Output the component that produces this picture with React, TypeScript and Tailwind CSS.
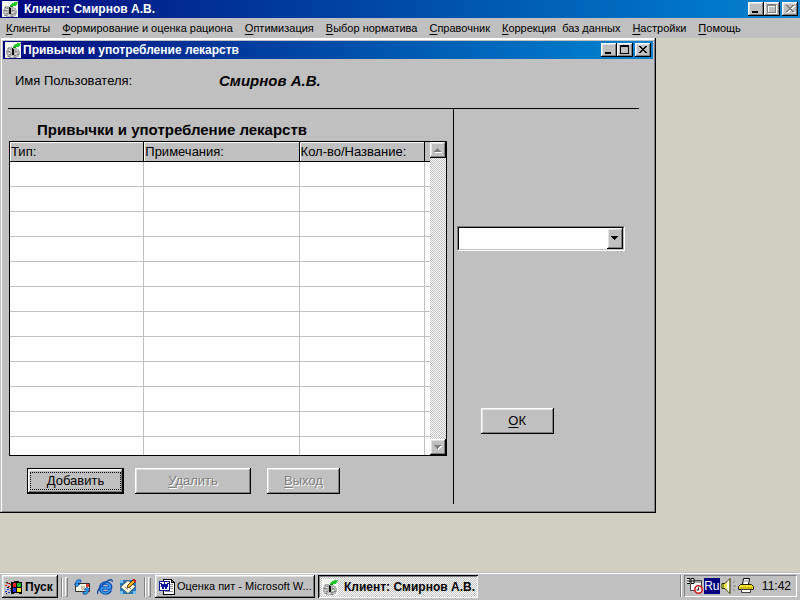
import type { ReactNode } from "react"
import clsx from "clsx"

const raised =
  "bg-[#c0c0c0] shadow-[inset_-1px_-1px_0_#000,inset_1px_1px_0_#fff,inset_-2px_-2px_0_#808080,inset_2px_2px_0_#dfdfdf]"
const checker = "bg-[conic-gradient(#fff_25%,#c0c0c0_0_50%,#fff_0_75%,#c0c0c0_0)] bg-size-[2px_2px]"

const menuItems = [
  { key: "К", rest: "лиенты" },
  { key: "Ф", rest: "ормирование и оценка рациона" },
  { key: "О", rest: "птимизация" },
  { key: "В", rest: "ыбор норматива" },
  { key: "С", rest: "правочник" },
  { key: "К", rest: "оррекция\u00a0 баз данных" },
  { key: "Н", rest: "астройки" },
  { key: "П", rest: "омощь" },
]

function AppIcon() {
  return (
    <svg viewBox="0 0 16 16" className="h-4 w-4 shrink-0" shapeRendering="crispEdges" aria-hidden="true">
      <rect width="16" height="16" fill="#f4f8f0" />
      <path d="M3 5h4v1h5v1h2v2h1v4h-1v2h-2v1H4v-1H2v-2H1V8h1V6h1z" fill="#b4b4b4" />
      <path d="M3 6h1v1H3zM2 9h3v1H2zM4 12h2v1H4zM3 14h2v1H3zM10 9h2v1h-2zM12 12h2v1h-2zM9 13h2v1H9zM5 7h1v1H5zM9 15h2v1H9z" fill="#808080" />
      <path d="M4 8h2v1H4zM3 11h2v1H3zM11 8h1v1h-1zM10 11h2v1h-2zM6 14h2v1H6z" fill="#e4e4e4" />
      <path d="M7 6h1v1h1v6H7z" fill="#101010" />
      <path d="M9 3h1V2h2V1h4v1h-1v2h-1v1h-3v1H8V4h1z" fill="#20c828" />
      <path d="M8 5h3v1H8z" fill="#109018" />
    </svg>
  )
}

function CaptionButton({ label, disabled, children }: { label: string; disabled?: boolean; children: ReactNode }) {
  return (
    <button type="button" aria-label={label} disabled={disabled} className={clsx("h-[14px] w-4", raised)}>
      <svg viewBox="0 0 16 14" className="h-[14px] w-4" shapeRendering="crispEdges" fill="none" aria-hidden="true">
        {children}
      </svg>
    </button>
  )
}

const cross = "M4 3h2v1h1v1h2V4h1V3h2v1h-1v1h-1v1H9v1h1v1h1v1h1v1h-2V9H9V8H7v1H6v1H4V9h1V8h1V7h1V6H6V5H5V4H4z"

function CaptionButtons({ inactive }: { inactive?: boolean }) {
  return (
    <div className="ml-auto flex">
      <CaptionButton label="Свернуть">
        <path d="M4 9h6v2H4z" fill="#000" />
      </CaptionButton>
      <CaptionButton label="Развернуть" disabled={inactive}>
        {inactive && <path d="M4 3h9v9H4zM5 5v6h7V5z" fillRule="evenodd" fill="#fff" />}
        <path d="M3 2h9v9H3zM4 4v6h7V4z" fillRule="evenodd" fill={inactive ? "#808080" : "#000"} />
      </CaptionButton>
      <span className="w-[2px]" />
      <CaptionButton label="Закрыть" disabled={inactive}>
        {inactive && <path d={cross} transform="translate(1 1)" fill="#fff" />}
        <path d={cross} fill={inactive ? "#808080" : "#000"} />
      </CaptionButton>
    </div>
  )
}

function PushButton({ hotkey, rest, className, disabled, focused }: {
  hotkey: string
  rest: string
  className: string
  disabled?: boolean
  focused?: boolean
}) {
  return (
    <button
      type="button"
      disabled={disabled}
      className={clsx(
        "h-[26px] text-[13px] leading-4",
        raised,
        focused && "border border-black p-[2px]",
        disabled && "text-[#808080] [text-shadow:1px_1px_0_#fff]",
        className,
      )}
    >
      <span className={clsx("block", focused && "border border-dotted border-black")}>
        <u className="underline-offset-2">{hotkey}</u>
        {rest}
      </span>
    </button>
  )
}

function ScrollButton({ label, down }: { label: string; down?: boolean }) {
  return (
    <button type="button" aria-label={label} className={clsx("h-4 w-4", raised)}>
      <svg viewBox="0 0 16 16" className="h-4 w-4" shapeRendering="crispEdges" aria-hidden="true">
        {down ? (
          <>
            <path d="M5 7h7v1h-1v1h-1v1H9v1H8v-1H7V9H6V8H5z" fill="#fff" />
            <path d="M4 6h7v1h-1v1H9v1H8v1H7V9H6V8H5V7H4z" fill="#808080" />
          </>
        ) : (
          <>
            <path d="M5 10h7v1H5z" fill="#fff" />
            <path d="M7 6h1v1h1v1h1v1h1v1H4V9h1V8h1V7h1z" fill="#808080" />
          </>
        )}
      </svg>
    </button>
  )
}

function HabitsTable() {
  const cell = "border-r border-[#c0c0c0]"
  const head = "h-5 border-r border-b border-black p-0 pl-px text-left font-normal shadow-[inset_1px_1px_0_#fff]"
  return (
    <div className="flex border border-black bg-white">
      <table className="flex-1 table-fixed border-separate border-spacing-0 text-[13px] leading-4">
        <colgroup>
          <col className="w-[32%]" />
          <col className="w-[37%]" />
          <col className="w-[30%]" />
          <col />
        </colgroup>
        <thead className="bg-[#c0c0c0]">
          <tr>
            <th className={head}>Тип:</th>
            <th className={head}>Примечания:</th>
            <th className={head}>Кол-во/Название:</th>
            <td className="border-b border-black p-0" />
          </tr>
        </thead>
        <tbody>
          {Array.from({ length: 11 }, (_, i) => (
            <tr key={i} className="h-[25px]">
              <td className={clsx(cell, "border-b")} />
              <td className={clsx(cell, "border-b")} />
              <td className={clsx(cell, "border-b")} />
              <td className="border-b border-[#c0c0c0] p-0" />
            </tr>
          ))}
          <tr className="h-[18px]">
            <td className={cell} />
            <td className={cell} />
            <td className={cell} />
            <td className="p-0" />
          </tr>
        </tbody>
      </table>
      <div className={clsx("flex w-4 flex-col justify-between", checker)}>
        <ScrollButton label="Вверх" />
        <ScrollButton label="Вниз" down />
      </div>
    </div>
  )
}

function ChildWindow() {
  return (
    <section className="w-[82%] border-r border-b border-black bg-[#c0c0c0] pl-px">
      <div className="border border-t-2 border-t-white border-r-[#808080] border-b-[#808080] border-l-white pt-px pr-px pl-px">
        <header className="flex h-[18px] items-center gap-[2px] bg-linear-to-r from-[#000080] to-[#1084d0] px-[2px] font-bold text-white">
          <AppIcon />
          <h2 className="text-[12px] leading-4">Привычки и употребление лекарств</h2>
          <CaptionButtons />
        </header>
        <div className="pr-[14px] pb-[7px] pl-[5px]">
          <div className="flex h-[50px] items-start border-b border-black pt-3 pl-[7px]">
            <span className="w-[204px] text-[13px] leading-5">Имя Пользователя:</span>
            <span className="text-[15px] leading-5 font-bold italic">Смирнов А.В.</span>
          </div>
          <div className="grid grid-cols-[444fr_186fr]">
            <div className="pt-[11px] pr-[6px] pb-[10px] pl-px">
              <h3 className="mb-px pl-7 text-[15px] leading-5 font-bold">Привычки и употребление лекарств</h3>
              <HabitsTable />
              <div className="flex pt-3 pl-[18px]">
                <PushButton hotkey="Д" rest="обавить" focused className="mr-[11px] w-[97px]" />
                <PushButton hotkey="У" rest="далить" disabled className="mr-4 w-[116px]" />
                <PushButton hotkey="В" rest="ыход" disabled className="w-[73px]" />
              </div>
            </div>
            <div className="border-l border-black pt-[117px] pl-[3px]">
              <div className="relative mr-[14px] border border-t-[#808080] border-r-white border-b-white border-l-[#808080]">
                <select
                  aria-label="Тип привычки"
                  className="block h-[23px] w-full appearance-none border border-t-black border-r-[#c0c0c0] border-b-[#c0c0c0] border-l-black bg-white px-1 text-[13px]"
                >
                  <option></option>
                </select>
                <span className={clsx("pointer-events-none absolute top-px right-px bottom-px w-4", raised)}>
                  <svg viewBox="0 0 16 21" className="h-[21px] w-4" shapeRendering="crispEdges" aria-hidden="true">
                    <path d="M4 8h7v1h-1v1H9v1H8v1H7v-1H6v-1H5V9H4z" fill="#000" />
                  </svg>
                </span>
              </div>
              <PushButton hotkey="О" rest="К" className="mt-[157px] ml-6 w-[73px]" />
            </div>
          </div>
        </div>
      </div>
    </section>
  )
}

function Grip() {
  return (
    <span className="flex h-5 gap-[2px]">
      <span className="w-[2px] border-r border-l border-l-[#808080] border-r-white" />
      <span className="w-[3px] border border-t-white border-r-[#808080] border-b-[#808080] border-l-white" />
    </span>
  )
}

function StartFlag() {
  return (
    <svg viewBox="0 0 18 16" className="h-4 w-[18px]" shapeRendering="crispEdges" aria-hidden="true">
      <path d="M6 3h3V2h5v1h3v12h-3v-1H9v1H6z" fill="#000" />
      <path d="M8 4h3v4H8zM2 4h2v1H2zM5 5h1v1H5zM0 6h2v1H0zM3 7h2v1H3z" fill="#f02020" />
      <path d="M12 4h4v4h-4z" fill="#20b828" />
      <path d="M8 9h3v4H8zM2 10h2v1H2zM5 11h1v1H5zM0 12h2v1H0zM3 13h2v1H3z" fill="#2030e0" />
      <path d="M12 9h4v4h-4z" fill="#f8e820" />
      <path d="M1 3h2v1H1zM4 4h1v1H4zM2 8h2v1H2zM5 9h1v1H5zM1 14h1v1H1z" fill="#000" />
    </svg>
  )
}

function MailIcon() {
  return (
    <svg viewBox="0 0 16 16" className="h-4 w-4" aria-hidden="true">
      <path d="M1.500 4.500h14v8h-14z" fill="#fffbe8" stroke="#303030" />
      <path d="M12 5h3v3h-3z" fill="#e04028" />
      <path d="M7 8h4M7 10h5" stroke="#a09070" />
      <path d="M7 1C4 0 1 1 2 5H0l3 3 3-3H4c0-2 1-2 3-2zM9 15c3 1 6 0 5-4h2l-3-3-3 3h2c0 2-1 2-3 2z" fill="#30a0f0" stroke="#103090" strokeWidth=".6" />
    </svg>
  )
}

function ExplorerIcon() {
  return (
    <svg viewBox="0 0 16 16" className="h-4 w-4" aria-hidden="true">
      <path d="M13.500 11c-1 2-3 3-5 3-3 0-5-2-5-5s2-5 5-5 6 2 5 5H5" fill="none" stroke="#1050b8" strokeWidth="3.400" />
      <path d="M13 11c-1 2-3 3-5 3-3 0-4-2-4-5s2-5 4.500-5 5.500 2 4.500 5H5" fill="none" stroke="#38a0f0" strokeWidth="1.600" />
      <path d="M1 15c-2-2 3-9 8-12 4-3 7-3 6 0" fill="none" stroke="#1048a8" strokeWidth="1.300" />
    </svg>
  )
}

function DesktopIcon() {
  return (
    <svg viewBox="0 0 16 16" className="h-4 w-4" aria-hidden="true">
      <path d="M0 1h16v14H0z" fill="#2878b8" />
      <path d="M0 1h3v3H0zM0 12h3v3H0zM13 12h3v3h-3z" fill="#70c0e8" />
      <path d="M8 1.500l7.500 6L8 14.500.5 8z" fill="#fff8dc" stroke="#303030" strokeWidth=".6" />
      <path d="M5 8l3 3M7 6l4 4" stroke="#a0a0a0" />
      <path d="M7 9l1-3 6-6 2 2-6 6z" fill="#f0b020" stroke="#402000" strokeWidth=".8" />
      <path d="M13 0l3 3" stroke="#d02020" strokeWidth="2" />
    </svg>
  )
}

function WordIcon() {
  return (
    <svg viewBox="0 0 16 16" className="h-4 w-4 shrink-0" shapeRendering="crispEdges" aria-hidden="true">
      <path d="M4 0h9v1h1v1h1v1h1v13H4z" fill="#000" />
      <path d="M5 1h7v3h3v11H5z" fill="#fff" />
      <path d="M13 2h1v1h-1zM11 5h3v1h-3zM11 7h3v1h-3zM11 9h3v1h-3zM6 12h8v1H6z" fill="#909090" />
      <path d="M0 2h11v10H0z" fill="#1018a0" />
      <path d="M1 3h9v8H1z" fill="#fff" />
      <path d="M2 4l2 5 1.500-4L7 9l2-5" fill="none" stroke="#1018a0" strokeWidth="1.800" />
    </svg>
  )
}

function SchedulerIcon() {
  return (
    <svg viewBox="0 0 16 16" className="h-4 w-4" aria-hidden="true">
      <path d="M3.500 2.500h11v10h-11z" fill="#fff" stroke="#404040" />
      <path d="M4 3h10v2H4z" fill="#a0a0a0" />
      <path d="M0 0h7v6H0z" fill="#fff" />
      <path d="M0 .5h3v5H0M0 3h3M4 .5h3v5H4zM4 3h3" fill="none" stroke="#000" />
      <circle cx="11.500" cy="11.500" r="3.700" fill="#fff" stroke="#d01818" strokeWidth="1.600" />
      <path d="M11.500 9.500v2.500H9.500" fill="none" stroke="#000" />
    </svg>
  )
}

function SpeakerIcon() {
  return (
    <svg viewBox="0 0 16 16" className="h-4 w-4" aria-hidden="true">
      <path d="M1 5.500h3l5-5v15l-5-5H1z" fill="#f8e860" stroke="#303000" />
      <path d="M6 4l2-2v12l-2-2z" fill="#fff" />
      <path d="M1 6h2v4H1z" fill="#909020" />
      <path d="M12 5l2-2M12 8h3M12 11l2 2" stroke="#808080" />
    </svg>
  )
}

function PrinterIcon() {
  return (
    <svg viewBox="0 0 16 16" className="h-4 w-4" aria-hidden="true">
      <path d="M5.500.5h6l-1 6h-6z" fill="#fff" stroke="#000" />
      <path d="M6 3h4" stroke="#909090" />
      <path d="M2.500 6.500h11l2 2v3h-15v-3z" fill="#f8e020" stroke="#202000" />
      <path d="M2 9h12v2H2z" fill="#d0b810" />
      <path d="M3.500 11.500h9v3h-9z" fill="#fff" stroke="#404040" />
    </svg>
  )
}

function Taskbar() {
  return (
    <footer className="flex h-7 items-start bg-[#c0c0c0] pt-[3px] pr-[3px] pl-[2px] shadow-[inset_0_1px_0_#c0c0c0,inset_0_2px_0_#fff]">
      <button type="button" className={clsx("flex h-[23px] w-14 items-center gap-[2px] pl-[3px] text-[12px] font-bold", raised)}>
        <StartFlag />
        Пуск
      </button>
      <div className="flex h-6 items-center pl-[3px]">
        <Grip />
        <div className="flex gap-[7px] pr-2 pl-[6px]">
          <a href="#mail" aria-label="Outlook Express"><MailIcon /></a>
          <a href="#browser" aria-label="Internet Explorer"><ExplorerIcon /></a>
          <a href="#desktop" aria-label="Рабочий стол"><DesktopIcon /></a>
        </div>
        <Grip />
      </div>
      <div className="flex min-w-0 flex-1 gap-[3px] pl-1">
        <button type="button" className={clsx("flex h-[23px] w-40 items-center gap-[2px] pl-1 text-[11px]", raised)}>
          <WordIcon />
          <span className="whitespace-nowrap">Оценка пит - Microsoft W...</span>
        </button>
        <button
          type="button"
          className={clsx(
            "flex h-[23px] w-40 items-center gap-[6px] pt-px pl-1 text-[12px] font-bold shadow-[inset_1px_1px_0_#000,inset_-1px_-1px_0_#fff,inset_2px_2px_0_#808080]",
            checker,
          )}
        >
          <AppIcon />
          <span className="whitespace-nowrap">Клиент: Смирнов А.В.</span>
        </button>
      </div>
      <span className="mr-[2px] h-[22px] w-[2px] border-r border-l border-l-[#808080] border-r-white" />
      <div className="flex h-[22px] items-center border border-t-[#808080] border-r-white border-b-white border-l-[#808080] pr-[5px] pl-[2px] text-[12px]">
        <SchedulerIcon />
        <span className="mr-px ml-px h-4 w-4 bg-[#000080] text-center leading-4 text-white">Ru</span>
        <SpeakerIcon />
        <span className="w-px" />
        <PrinterIcon />
        <time className="ml-2">11:42</time>
      </div>
    </footer>
  )
}

export default function App() {
  return (
    <div className="flex min-h-screen flex-col bg-[#d0cfc0] font-['Liberation_Sans',Arial,sans-serif] text-black">
      <header className="flex h-[18px] items-center gap-[6px] bg-linear-to-r from-[#000080] to-[#1084d0] px-[2px] font-bold text-white">
        <AppIcon />
        <h1 className="text-[12px] leading-4">Клиент: Смирнов А.В.</h1>
        <CaptionButtons inactive />
      </header>
      <nav className="flex h-5 items-center gap-3 bg-[#c0c0c0] px-[6px] text-[11px] whitespace-nowrap">
        {menuItems.map((item) => (
          <a key={item.rest} href="#menu">
            <u className="underline-offset-2">{item.key}</u>
            {item.rest}
          </a>
        ))}
      </nav>
      <main className="flex-1">
        <ChildWindow />
      </main>
      <Taskbar />
    </div>
  )
}
